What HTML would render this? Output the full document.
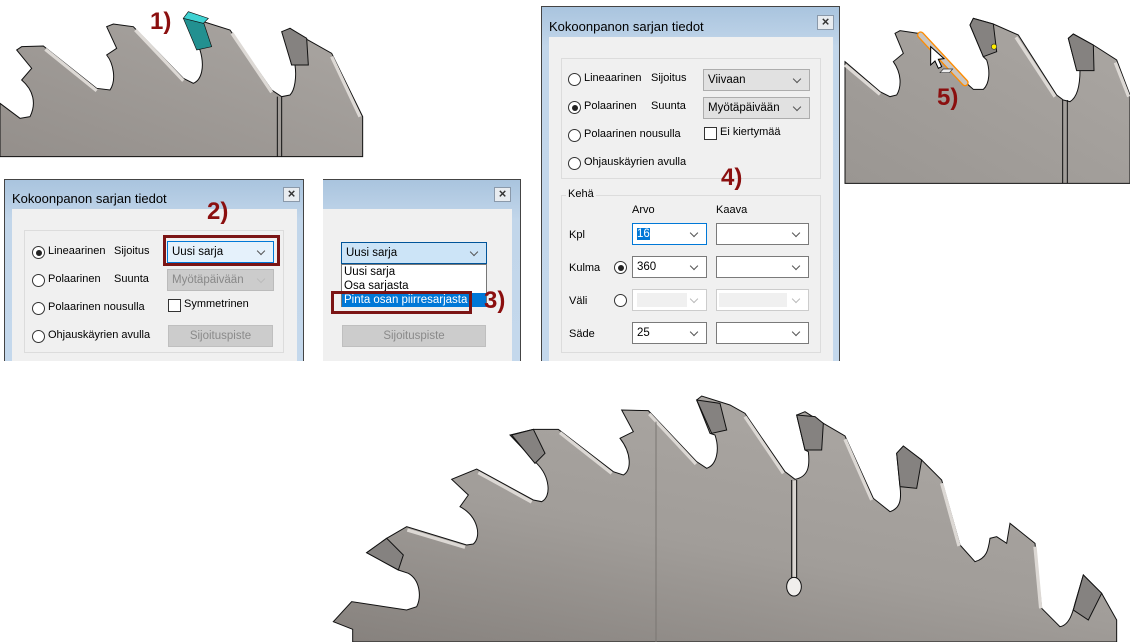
<!DOCTYPE html>
<html><head><meta charset="utf-8"><style>
*{margin:0;padding:0;box-sizing:border-box}
body{width:1130px;height:642px;background:#fff;position:relative;overflow:hidden;font-family:"Liberation Sans",sans-serif;font-size:11px;color:#000}
.a{position:absolute}
.win{position:absolute;border:1px solid #444;border-bottom:none;background:linear-gradient(#a9c4de,#c2d6ea 40px,#c4d8ec);overflow:hidden}
.title{position:absolute;left:7px;top:11px;font-size:13px}
.cls{position:absolute;width:17px;height:15px;border:1px solid #8a99aa;background:#e8ecf0;font-size:13px;line-height:12px;text-align:center;color:#333;font-weight:bold}
.client{position:absolute;background:#f0f0f0}
.grp{position:absolute;border:1px solid #dcdcdc}
.rad{position:absolute;width:13px;height:13px;border:1px solid #333;border-radius:50%;background:#fff}
.rad.on::after{content:"";position:absolute;left:2.5px;top:2.5px;width:6px;height:6px;border-radius:50%;background:#222}
.lbl{position:absolute;white-space:nowrap}
.cb{position:absolute;border:1px solid #7a7a7a;background:#fff;padding-left:4px;line-height:20px;white-space:nowrap;font-size:11.5px}
.cb::after{content:"";position:absolute;right:9px;top:6px;width:5px;height:5px;border-right:1px solid #555;border-bottom:1px solid #555;transform:rotate(45deg)}
.cb.g{background:#e1e1e1;border-color:#adadad}
.cb.d{background:#ccc;border-color:#bbb;color:#888}
.cb.d::after,.cb.dd::after{border-color:#bbb}
.cb.dd{background:#fff;border-color:#ccc}
.chk{position:absolute;width:13px;height:13px;border:1px solid #333;background:#fff}
.btn{position:absolute;background:#ccc;border:1px solid #bfbfbf;color:#8a8a8a;text-align:center;line-height:20px;font-size:11.5px}
.red{position:absolute;border:3px solid #7b1414}
.num{position:absolute;color:#8b0f0f;font-weight:bold;font-size:24px}
</style></head><body>

<!-- panel 1 -->
<svg class="a" style="left:0;top:0" width="370" height="160" viewBox="0 0 1110 480">
<defs><linearGradient id="g1" x1="0" y1="1" x2="1" y2="0"><stop offset="0" stop-color="#948f8b"/><stop offset="1" stop-color="#aaa6a2"/></linearGradient></defs>
<path d="M0,310 L60,355 L90,350 C110,310 100,270 65,240 L95,205 L50,150 L65,140 L130,138 L290,265 L330,270 C350,240 340,190 320,165 L350,145 L320,80 L340,72 L400,80 L550,235 L580,250 C605,240 615,200 600,150 L585,120 L610,65 L690,90 L815,270 L845,290 L870,285 C885,270 890,230 885,195 L875,195 L850,95 L870,85 L915,115 L995,160 L1088,350 L1088,470 L0,470 Z" fill="url(#g1)" stroke="#111" stroke-width="3"/>
<path d="M136,148 L290,272 M406,90 L550,242 M696,100 L815,277 M995,170 L1080,350" stroke="#ddd9d5" stroke-width="10" fill="none"/>
<path d="M832,290 L832,470 M845,290 L845,470" stroke="#111" stroke-width="3"/>
<path d="M845,95 L870,85 L920,115 L925,195 L875,195 Z" fill="#858280" stroke="#111" stroke-width="3"/>
<path d="M585,60 L610,65 L635,140 L590,150 L550,55 Z" fill="#229090" stroke="#111" stroke-width="2"/>
<path d="M550,55 L565,35 L625,55 L610,70 Z" fill="#3fd2d2" stroke="#111" stroke-width="2"/>
</svg>
<div class="num" style="left:150px;top:8px">1)</div>

<!-- dialog 2 -->
<div class="win" style="left:4px;top:179px;width:300px;height:182px">
<div class="title">Kokoonpanon sarjan tiedot</div>
<div class="cls" style="left:278px;top:7px">×</div>
<div class="client" style="left:7px;top:29px;width:285px;height:160px"></div>
</div>
<div class="grp" style="left:24px;top:230px;width:260px;height:123px"></div>
<div class="rad on" style="left:32px;top:246px"></div><div class="lbl" style="left:48px;top:245px">Lineaarinen</div><div class="lbl" style="left:114px;top:245px">Sijoitus</div>
<div class="rad" style="left:32px;top:274px"></div><div class="lbl" style="left:48px;top:273px">Polaarinen</div><div class="lbl" style="left:114px;top:273px">Suunta</div>
<div class="rad" style="left:32px;top:302px"></div><div class="lbl" style="left:48px;top:301px">Polaarinen nousulla</div>
<div class="rad" style="left:32px;top:330px"></div><div class="lbl" style="left:48px;top:329px">Ohjauskäyrien avulla</div>
<div class="cb" style="left:167px;top:241px;width:107px;height:22px;background:#e5f1fb;border-color:#0078d7">Uusi sarja</div>
<div class="red" style="left:163px;top:235px;width:117px;height:31px"></div>
<div class="cb d" style="left:167px;top:269px;width:107px;height:22px">Myötäpäivään</div>
<div class="chk" style="left:168px;top:299px"></div><div class="lbl" style="left:184px;top:298px">Symmetrinen</div>
<div class="btn" style="left:168px;top:325px;width:105px;height:22px">Sijoituspiste</div>
<div class="num" style="left:207px;top:198px">2)</div>

<!-- dialog 3 -->
<div class="win" style="left:323px;top:179px;width:198px;height:182px;border-left:none">
<div class="cls" style="left:171px;top:7px">×</div>
<div class="client" style="left:0;top:29px;width:189px;height:160px"></div>
</div>
<div class="cb" style="left:341px;top:242px;width:146px;height:22px;background:#cce4f7;border-color:#005499">Uusi sarja</div>
<div class="btn" style="left:342px;top:325px;width:144px;height:22px">Sijoituspiste</div>
<div class="a" style="left:341px;top:264px;width:146px;height:43px;background:#fff;border:1px solid #777;line-height:14px;font-size:11.5px">
<div style="padding-left:2px">Uusi sarja</div><div style="padding-left:2px">Osa sarjasta</div><div style="padding-left:2px;background:#0078d7;color:#fff;white-space:nowrap">Pinta osan piirresarjasta</div></div>
<div class="red" style="left:331px;top:291px;width:141px;height:23px"></div>
<div class="num" style="left:484px;top:287px">3)</div>

<!-- dialog 4 -->
<div class="win" style="left:541px;top:6px;width:299px;height:355px">
<div class="title" style="top:12px">Kokoonpanon sarjan tiedot</div>
<div class="cls" style="left:275px;top:8px">×</div>
<div class="client" style="left:7px;top:30px;width:284px;height:330px"></div>
</div>
<div class="grp" style="left:561px;top:58px;width:260px;height:121px"></div>
<div class="rad" style="left:568px;top:73px"></div><div class="lbl" style="left:584px;top:72px">Lineaarinen</div><div class="lbl" style="left:651px;top:72px">Sijoitus</div>
<div class="rad on" style="left:568px;top:101px"></div><div class="lbl" style="left:584px;top:100px">Polaarinen</div><div class="lbl" style="left:651px;top:100px">Suunta</div>
<div class="rad" style="left:568px;top:129px"></div><div class="lbl" style="left:584px;top:128px">Polaarinen nousulla</div>
<div class="rad" style="left:568px;top:157px"></div><div class="lbl" style="left:584px;top:156px">Ohjauskäyrien avulla</div>
<div class="cb g" style="left:703px;top:69px;width:107px;height:22px">Viivaan</div>
<div class="cb g" style="left:703px;top:97px;width:107px;height:22px">Myötäpäivään</div>
<div class="chk" style="left:704px;top:127px"></div><div class="lbl" style="left:720px;top:126px">Ei kiertymää</div>
<div class="grp" style="left:561px;top:195px;width:260px;height:158px"></div>
<div class="lbl" style="left:566px;top:188px;background:#f0f0f0;padding:0 2px">Kehä</div>
<div class="lbl" style="left:632px;top:204px">Arvo</div><div class="lbl" style="left:716px;top:204px">Kaava</div>
<div class="lbl" style="left:569px;top:229px">Kpl</div>
<div class="lbl" style="left:569px;top:262px">Kulma</div>
<div class="lbl" style="left:569px;top:295px">Väli</div>
<div class="lbl" style="left:569px;top:328px">Säde</div>
<div class="rad on" style="left:614px;top:261px"></div>
<div class="rad" style="left:614px;top:294px"></div>
<div class="cb" style="left:632px;top:223px;width:75px;height:22px;border-color:#0078d7"><span style="background:#0078d7;color:#fff">16</span></div>
<div class="cb" style="left:632px;top:256px;width:75px;height:22px">360</div>
<div class="cb dd" style="left:632px;top:289px;width:75px;height:22px"><span style="display:inline-block;width:50px;height:14px;background:#f0f0f0;margin-top:3px"></span></div>
<div class="cb" style="left:632px;top:322px;width:75px;height:22px">25</div>
<div class="cb" style="left:716px;top:223px;width:93px;height:22px"></div>
<div class="cb" style="left:716px;top:256px;width:93px;height:22px"></div>
<div class="cb dd" style="left:716px;top:289px;width:93px;height:22px"><span style="display:inline-block;width:68px;height:14px;background:#f0f0f0;margin-top:3px;margin-left:-2px"></span></div>
<div class="cb" style="left:716px;top:322px;width:93px;height:22px"></div>
<div class="num" style="left:721px;top:164px">4)</div>

<!-- panel 5 -->
<svg class="a" style="left:840px;top:0" width="290" height="190" viewBox="0 0 870 570">
<defs><linearGradient id="g5" x1="0" y1="1" x2="1" y2="0"><stop offset="0" stop-color="#9a9692"/><stop offset="1" stop-color="#aba7a3"/></linearGradient></defs>
<path d="M15,185 L120,275 L150,290 L170,285 C185,260 185,220 160,185 L190,160 L165,100 L180,92 L235,100 L380,250 L400,268 L430,268 C450,250 450,210 440,180 L430,170 L390,75 L400,55 L460,72 L535,105 L650,285 L670,300 L690,305 C715,290 720,250 720,210 L710,210 L685,115 L700,102 L760,135 L830,180 L870,285 L870,550 L15,550 Z" fill="url(#g5)" stroke="#111" stroke-width="3"/>
<path d="M15,195 L120,283 M528,112 L645,290 M826,188 L866,290" stroke="#ddd9d5" stroke-width="10" fill="none"/>
<path d="M668,300 L668,550 M682,300 L682,550" stroke="#111" stroke-width="3"/>
<path d="M390,75 L400,55 L460,72 L470,155 L430,170 Z" fill="#858280" stroke="#111" stroke-width="3"/>
<path d="M700,102 L760,135 L762,212 L710,212 L685,115 Z" fill="#858280" stroke="#111" stroke-width="3"/>
<line x1="242" y1="105" x2="375" y2="248" stroke="#ff8c00" stroke-width="22" stroke-linecap="round"/>
<line x1="242" y1="105" x2="375" y2="248" stroke="#c9c5c1" stroke-width="14" stroke-linecap="round"/>
<circle cx="462" cy="140" r="8" fill="#ffee00" stroke="#333" stroke-width="2"/>
<path d="M272,140 L272,195 L285,183 L295,205 L305,200 L295,178 L312,176 Z" fill="#fff" stroke="#000" stroke-width="3"/>
<path d="M300,218 L310,207 L338,207 L328,218 Z" fill="#eee" stroke="#333" stroke-width="2"/>
</svg>
<div class="num" style="left:937px;top:84px">5)</div>

<!-- bottom saw -->
<svg class="a" style="left:330px;top:390px" width="800" height="252" viewBox="0 0 2400 756">
<defs><linearGradient id="gb" x1="0" y1="1" x2="0.6" y2="0"><stop offset="0" stop-color="#86817d"/><stop offset="0.5" stop-color="#a19d99"/><stop offset="1" stop-color="#aaa6a2"/></linearGradient></defs>
<path d="M68,756 L68,718 L10,695 L65,635 L230,660 L260,650 C275,620 270,570 235,550 L205,540 L110,488 L170,445 L230,410 L410,465 L430,462 C455,440 445,380 390,350 L415,315 L365,268 L440,237 L610,330 L635,335 C665,320 660,260 620,220 L540,135 L610,118 L685,118 L850,245 L880,255 C905,240 905,190 870,145 L910,125 L875,60 L955,62 L1100,215 L1130,235 C1160,225 1170,180 1155,135 L1140,130 L1100,30 L1115,18 L1200,45 L1245,70 L1365,245 L1395,268 C1435,260 1440,230 1435,185 L1425,180 L1400,75 L1425,65 L1480,100 L1545,138 L1630,325 L1680,365 C1710,355 1715,330 1710,290 L1700,190 L1720,168 L1775,210 L1835,270 L1890,465 L1935,515 C1970,505 1975,480 1980,445 L2000,440 L2030,460 L2040,400 L2115,460 L2135,655 L2190,710 C2220,705 2230,660 2235,640 L2260,555 L2315,610 L2360,690 L2360,756 Z" fill="url(#gb)" stroke="#111" stroke-width="3"/>
<path d="M445,248 L605,336 M690,128 L845,250 M958,72 L1098,222 M232,420 L405,472 M1245,80 L1360,250 M1545,148 L1625,330 M1835,280 L1887,468 M2115,470 L2132,655" stroke="#dcd8d4" stroke-width="10" fill="none"/>
<path d="M110,488 L170,445 L220,495 L205,540 Z M545,135 L610,118 L645,190 L615,220 Z M1100,30 L1170,40 L1190,120 L1145,130 Z M1400,75 L1455,80 L1480,100 L1475,180 L1425,180 Z M1700,190 L1720,168 L1775,210 L1760,295 L1710,290 Z M2260,555 L2315,610 L2275,690 L2230,660 Z" fill="#858280" stroke="#111" stroke-width="3"/>
<line x1="978" y1="95" x2="978" y2="756" stroke="#7a7672" stroke-width="3"/>
<path d="M1385,270 L1385,565 M1400,270 L1400,565" stroke="#111" stroke-width="3"/>
<path d="M1388,272 L1398,272 L1398,565 L1388,565 Z" fill="#d8d4d0"/>
<ellipse cx="1392" cy="590" rx="22" ry="28" fill="#f0eeec" stroke="#111" stroke-width="3"/>
</svg>
</body></html>
